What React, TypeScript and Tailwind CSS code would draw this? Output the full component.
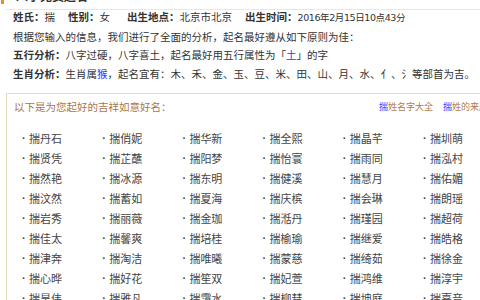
import React from "react";

const names = [
  "丹石", "俏妮", "华新", "全熙", "晶芊", "圳萌",
  "贤凭", "芷蘸", "阳梦", "怡寰", "雨同", "泓村",
  "然艳", "冰源", "东明", "健溪", "慧月", "佑媚",
  "汶然", "蓄如", "夏海", "庆槟", "会琳", "朗瑶",
  "岩秀", "丽薇", "金珈", "湉丹", "瑾园", "超荷",
  "佳太", "馨爽", "培桂", "榆瑜", "继爱", "皓格",
  "津奔", "淘洁", "唯曦", "蒙慈", "绮茹", "徐金",
  "心晔", "好花", "笙双", "妃萱", "鸿维", "淳宇",
  "昊伟", "雅凡", "霭水", "柳彗", "坤庭", "嘉音",
];

export default function App() {
  return (
    <div className="w-[480px] h-[300px] overflow-hidden bg-white text-[#333] font-['Noto_Sans_CJK_SC',sans-serif] flex flex-col">
      {/* Title (clipped at top) */}
      <div className="h-[9px] flex flex-col shrink-0">
        <div className="-mt-[11px] h-[14px] flex items-center pl-[1px] gap-[12px]">
          <span className="w-[3px] h-[6px] bg-[#f08a24] mt-[10px]"></span>
          <span className="text-[12px] font-bold text-[#333]">八字免费起名</span>
        </div>
      </div>
      <div className="ml-[6px] h-px shrink-0 bg-[#f1e6d6]"></div>

      {/* Info */}
      <div className="-mt-[2px] ml-[6px] pl-[7px] text-[10.5px] leading-[18.6px] whitespace-nowrap shrink-0">
        <div className="flex">
          <span className="w-[55px]"><b>姓氏：</b>揣</span>
          <span className="w-[59px]"><b>性别：</b>女</span>
          <span className="w-[118px]"><b>出生地点：</b>北京市北京</span>
          <span>
            <b>出生时间：</b>
            <span className="text-[9.5px] font-['DejaVu_Sans','Noto_Sans_CJK_SC',sans-serif] tracking-[-0.4px]">2016年2月15日10点43分</span>
          </span>
        </div>
        <div>根据您输入的信息，我们进行了全面的分析，起名最好遵从如下原则为佳：</div>
        <div>
          <b>五行分析：</b>八字过硬，八字喜土，起名最好用五行属性为「<span className="text-[#1a3cff]">土</span>」的字
        </div>
        <div>
          <b>生肖分析：</b>生肖属<span className="text-[#1a3cff]">猴</span>，起名宜有：木、禾、金、玉、豆、米、田、山、月、水、亻、氵等部首为吉。
        </div>
      </div>

      {/* Names box */}
      <div className="mt-[10px] ml-[6px] border-t border-l border-[#ecd8bb] shrink-0">
        <div className="h-[24px] flex items-center justify-between pl-[7px] whitespace-nowrap">
          <span className="text-[10.5px] text-[#a8774a]">以下是为您起好的吉祥如意好名：</span>
          <div className="flex gap-[10px] text-[9px] -mr-[8px]">
            <span className="text-[#b07c4b]"><span className="text-[#1a3cff]">揣</span>姓名字大全</span>
            <span className="text-[#b07c4b]"><span className="text-[#1a3cff]">揣</span>姓的来历</span>
          </div>
        </div>
        <div className="pt-[10px] pl-[15px] grid grid-cols-[repeat(6,80.2px)] text-[11px] leading-[20px] text-[#444]">
          {names.map((n) => (
            <div key={n} className="flex items-center whitespace-nowrap">
              <span className="w-[7px] font-['Liberation_Sans',sans-serif] font-bold">·</span>
              <span>揣{n}</span>
            </div>
          ))}
        </div>
      </div>
    </div>
  );
}
